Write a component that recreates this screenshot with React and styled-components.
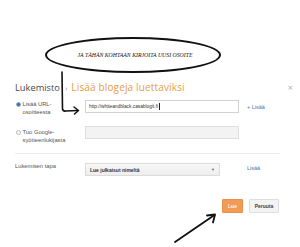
import React from 'react';
import styled, { createGlobalStyle } from 'styled-components';

const GlobalStyle = createGlobalStyle`
    html, body {
        margin: 0;
        padding: 0;
        background: #ffffff;
    }
`;

const Page = styled.div`
    position: relative;
    width: 300px;
    height: 247px;
    overflow: hidden;
    background: #ffffff;
    font-family: "Liberation Sans", Arial, sans-serif;
    display: flex;
    flex-direction: column;
`;

const Callout = styled.div`
    box-sizing: border-box;
    margin: 37px 0 0 45px;
    width: 176px;
    height: 36px;
    padding-left: 4px;
    border: 2px solid #111;
    border-radius: 50%;
    display: flex;
    align-items: center;
    justify-content: center;
    font-family: "Liberation Serif", "Times New Roman", serif;
    font-style: italic;
    font-size: 5.8px;
    color: #111;
    text-transform: uppercase;
`;

const Dialog = styled.div`
    display: flex;
    flex-direction: column;
    padding: 0 6px 0 15px;
`;

const Header = styled.div`
    display: flex;
    align-items: center;
    margin-top: 7px;
    height: 14px;
    font-family: "Open Sans", "Liberation Sans", sans-serif;
    font-size: 10px;
`;

const Crumb = styled.span`
    color: #4a4a4a;
    font-size: 9.3px;
`;

const Chevron = styled.span`
    color: #999;
    font-size: 8px;
    margin: 0 4px 0 5px;
`;

const Title = styled.span`
    color: #e69d3f;
    letter-spacing: 0.15px;
`;

const Close = styled.span`
    margin-left: auto;
    color: #b0b0b0;
    font-size: 9px;
    margin-right: 1px;
`;

const Body = styled.div`
    width: 265px;
    display: flex;
    flex-direction: column;
`;

const Grid = styled.div`
    display: grid;
    grid-template-columns: 62px 154px auto;
    column-gap: 8px;
    row-gap: ${props => props.gap || 10}px;
    margin-top: ${props => props.top || 0}px;
    align-items: start;
`;

const Label = styled.div`
    display: flex;
    align-items: flex-start;
    gap: 2px;
    margin-top: ${props => props.offset || 0}px;
    font-size: 5.8px;
    line-height: 8px;
    color: #555;
`;

const Radio = styled.span`
    box-sizing: border-box;
    flex: none;
    width: 5px;
    height: 5px;
    margin: 1.5px 0 0 0.5px;
    border-radius: 50%;
    border: 1px solid ${props => props.checked ? '#8aa9c9' : '#b8b8b8'};
    background: ${props => props.checked ? '#3d74b8' : '#fafafa'};
`;

const Input = styled.div`
    box-sizing: border-box;
    height: 13px;
    border: 1px solid ${props => props.disabled ? '#dedede' : '#d2d2d2'};
    background: ${props => props.disabled ? '#f3f3f3' : '#ffffff'};
    display: flex;
    align-items: center;
    padding-left: 3px;
    font-size: 4.8px;
    color: #333;
`;

const Caret = styled.span`
    width: 0.6px;
    height: 7px;
    background: #222;
    margin-left: 0.5px;
`;

const Link = styled.span`
    align-self: center;
    font-size: 5.5px;
    color: #3f78b5;
    margin-top: ${props => props.lift || 0}px;
`;

const Divider = styled.div`
    height: 1px;
    background: #e9e9e9;
    margin-top: 9px;
`;

const Select = styled.div`
    box-sizing: border-box;
    width: 135px;
    height: 13px;
    border: 1px solid #dcdcdc;
    background: linear-gradient(#f8f8f8, #eeeeee);
    display: flex;
    align-items: center;
    justify-content: space-between;
    padding: 0 4px 0 4px;
    font-size: 5px;
    font-weight: 700;
    color: #333;
`;

const SelectArrow = styled.span`
    font-size: 4px;
    color: #666;
`;

const Actions = styled.div`
    display: flex;
    justify-content: flex-end;
    gap: 6px;
    margin-top: 23px;
    padding-right: 1px;
`;

const Button = styled.div`
    box-sizing: border-box;
    height: 14px;
    min-width: ${props => props.width}px;
    display: flex;
    align-items: center;
    justify-content: center;
    font-size: 5px;
    font-weight: 700;
    border-radius: 1px;
    border: 1px solid ${props => props.primary ? '#e8904a' : '#dddddd'};
    background: ${props => props.primary ? '#f29b54' : '#f3f3f3'};
    color: ${props => props.primary ? '#fff6ee' : '#444'};
`;

const Annotations = styled.svg`
    position: absolute;
    left: 0;
    top: 0;
    pointer-events: none;
`;

export default function App() {
    return (
        <Page>
            <GlobalStyle />
            <Callout>Ja tähän kohtaan kirjoita uusi osoite</Callout>
            <Dialog>
                <Header>
                    <Crumb>Lukemisto</Crumb>
                    <Chevron>›</Chevron>
                    <Title>Lisää blogeja luettaviksi</Title>
                    <Close>×</Close>
                </Header>
                <Body>
                    <Grid top={6} gap={10}>
                        <Label>
                            <Radio checked />
                            <span>Lisää URL-<br />osoitteesta</span>
                        </Label>
                        <Input>http://whiteandblack.casablogit.fi<Caret /></Input>
                        <Link lift={-3}>+ Lisää</Link>
                        <Label offset={2}>
                            <Radio />
                            <span>Tuo Google-<br />syötteenlukijasta</span>
                        </Label>
                        <Input disabled />
                        <span />
                    </Grid>
                    <Divider />
                    <Grid top={9}>
                        <Label offset={-1}>Lukemisen tapa</Label>
                        <Select>
                            Lue julkaisut nimeltä
                            <SelectArrow>▼</SelectArrow>
                        </Select>
                        <Link lift={-3}>Lisää</Link>
                    </Grid>
                    <Actions>
                        <Button primary width={21}>Lue</Button>
                        <Button width={30}>Peruuta</Button>
                    </Actions>
                </Body>
            </Dialog>
            <Annotations width="300" height="247" viewBox="0 0 300 247">
                <g fill="none" stroke="#111" strokeLinecap="round" strokeLinejoin="round">
                    <path d="M62 72 L62.5 109 Q63 111.5 66 111 L78 110.5" strokeWidth="1.6" />
                    <path d="M74 107 L78.5 110.5 L74.5 114" strokeWidth="1.5" />
                    <path d="M175 242 L214.5 215" strokeWidth="1.8" />
                    <path d="M207 215.5 L215 214.5 L213 222.5" strokeWidth="1.8" />
                </g>
            </Annotations>
        </Page>
    );
}
